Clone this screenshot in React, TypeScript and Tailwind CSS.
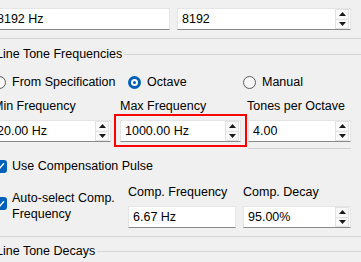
import React from "react";

function Arrows() {
  return (
    <div className="flex flex-col w-[14px] h-[20px] mr-[1px] shrink-0">
      <div className="flex-1 flex items-center justify-center bg-[#f9f9f9] border border-[#e2e2e2]">
        <svg width="7" height="4" viewBox="0 0 7 4">
          <path d="M3.5 0 L7 4 L0 4Z" fill="#1a1a1a" />
        </svg>
      </div>
      <div className="flex-1 flex items-center justify-center bg-[#f9f9f9] border border-t-0 border-[#e2e2e2]">
        <svg width="7" height="4" viewBox="0 0 7 4">
          <path d="M0 0 L7 0 L3.5 4Z" fill="#1a1a1a" />
        </svg>
      </div>
    </div>
  );
}

function Field({ value, spin, className = "" }: { value: string; spin?: boolean; className?: string }) {
  return (
    <div
      className={`h-[22px] flex items-center bg-white border border-[#e5e5e5] border-b-[#8a8a8a] ${className}`}
    >
      <span className="flex-1 pl-[4px] text-[12.5px] leading-none text-black whitespace-nowrap overflow-hidden">
        {value}
      </span>
      {spin && <Arrows />}
    </div>
  );
}

function Radio({ checked }: { checked?: boolean }) {
  if (checked) {
    return (
      <div className="w-[13px] h-[13px] rounded-full bg-[#005fb8] flex items-center justify-center shrink-0">
        <div className="w-[7px] h-[7px] rounded-full bg-white flex items-center justify-center">
          <div className="w-[3px] h-[3px] rounded-full bg-[#005fb8]" />
        </div>
      </div>
    );
  }
  return <div className="w-[13px] h-[13px] rounded-full border border-[#5c5c5c] bg-[#f7f7f7] shrink-0" />;
}

function Check({ className = "" }: { className?: string }) {
  return (
    <div className={`w-[13px] h-[13px] rounded-[3px] bg-[#005fb8] flex items-center justify-center shrink-0 ${className}`}>
      <svg width="9" height="8" viewBox="0 0 9 8">
        <path d="M1 4.2 L3.4 6.5 L8 1.3" stroke="#fff" strokeWidth="1.4" fill="none" />
      </svg>
    </div>
  );
}

function GroupTitle({ text }: { text: string }) {
  return (
    <div className="flex items-center h-[16px]">
      <span className="pl-[4px] pr-[2px] text-[12.5px] leading-[16px] whitespace-nowrap">{text}</span>
      <div className="flex-1 h-px bg-[#d6d6d6] -mr-[10px]" />
    </div>
  );
}

export default function App() {
  return (
    <div className="w-[361px] h-[262px] overflow-hidden bg-[#f0f0f0] text-black font-['Liberation_Sans',Arial,sans-serif]">
      <div className="ml-[-8px] mr-[10px] flex flex-col">
        {/* top labels (cut off) */}
        <div className="mt-[-16px] h-[16px] flex text-[12.5px] leading-[16px]">
          <span className="w-[185px] pl-[1px]">Sample Rate</span>
          <span>Block Size</span>
        </div>
        {/* top inputs */}
        <div className="mt-[8px] flex gap-[7px]">
          <Field value="8192 Hz" className="w-[178px]" />
          <Field value="8192" spin className="flex-1" />
        </div>
        {/* divider */}
        <div className="mt-[8px] h-px bg-[#d6d6d6] -mr-[10px]" />
        {/* group title */}
        <div className="mt-[7px]">
          <GroupTitle text="Line Tone Frequencies" />
        </div>
        {/* radios */}
        <div className="mt-[12px] h-[16px] flex items-center text-[12.5px] leading-[16px]">
          <div className="w-[136px] flex items-center gap-[6px] pl-[1px]">
            <Radio />
            <span className="whitespace-nowrap">From Specification</span>
          </div>
          <div className="w-[115px] flex items-center gap-[6px]">
            <Radio checked />
            <span>Octave</span>
          </div>
          <div className="flex items-center gap-[6px]">
            <Radio />
            <span>Manual</span>
          </div>
        </div>
        {/* labels */}
        <div className="mt-[8px] h-[16px] flex text-[12.5px] leading-[16px]">
          <span className="w-[128px] pl-[1px]">Min Frequency</span>
          <span className="w-[127px]">Max Frequency</span>
          <span>Tones per Octave</span>
        </div>
        {/* spin inputs */}
        <div className="mt-[6px] flex items-start">
          <Field value="20.00 Hz" spin className="w-[119px]" />
          <div className="relative ml-[9px] w-[121px]">
            <Field value="1000.00 Hz" spin />
            <div className="absolute left-[-6px] top-[-6px] right-[-6px] bottom-[-5px] border-2 border-[#ff0000] pointer-events-none" />
          </div>
          <div className="relative ml-[7px] flex-1">
            <Field value="4.00" spin />
            <div className="absolute left-0 right-0 bottom-[-7px] h-px bg-[#d0d0d0]" />
          </div>
        </div>
        {/* use compensation pulse */}
        <div className="mt-[16px] h-[16px] flex items-center gap-[5px] pl-[2px] text-[12.5px] leading-[16px]">
          <Check />
          <span>Use Compensation Pulse</span>
        </div>
        {/* comp section */}
        <div className="mt-[10px] flex items-start">
          <div className="w-[136px] flex items-start gap-[5px] pl-[2px] mt-[6px]">
            <Check className="mt-[7px]" />
            <span className="text-[12.5px] leading-[16px]">
              Auto-select Comp.
              <br />
              Frequency
            </span>
          </div>
          <div className="w-[108px] flex flex-col">
            <span className="h-[16px] text-[12.5px] leading-[16px]">Comp. Frequency</span>
            <Field value="6.67 Hz" className="mt-[6px]" />
          </div>
          <div className="ml-[7px] flex-1 flex flex-col">
            <span className="h-[16px] text-[12.5px] leading-[16px]">Comp. Decay</span>
            <Field value="95.00%" spin className="mt-[6px]" />
          </div>
        </div>
        {/* divider */}
        <div className="mt-[8px] h-px bg-[#d6d6d6] -mr-[10px]" />
        <div className="mt-[6px]">
          <GroupTitle text="Line Tone Decays" />
        </div>
      </div>
    </div>
  );
}
